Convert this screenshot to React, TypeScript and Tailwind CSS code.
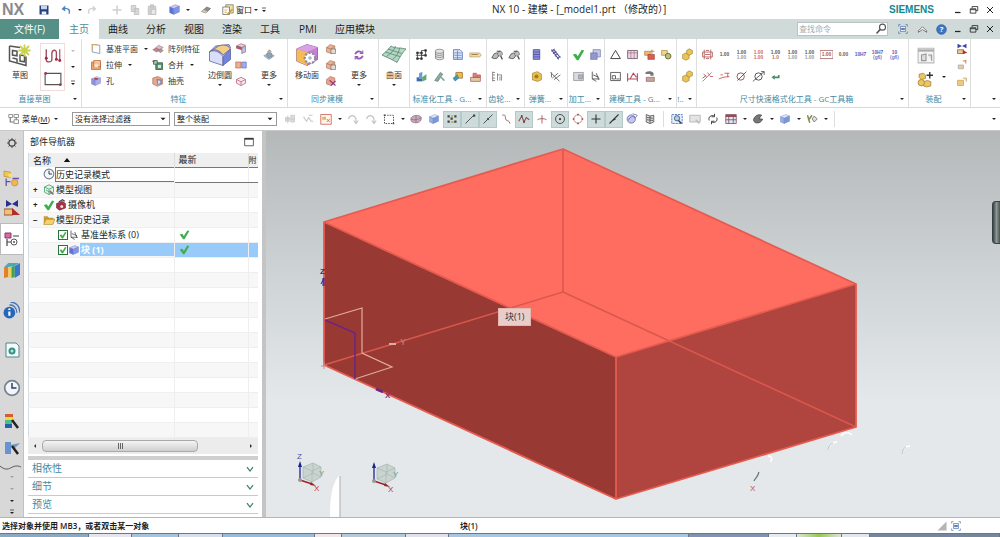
import React from 'react';

const box3d = (top: string, left: string, right: string) => (
  <g stroke="#6b6fae" strokeWidth="0.5" strokeLinejoin="round">
    <path d="M2 5 9 2 14 4 7 7Z" fill={top} />
    <path d="M2 5 7 7V14L2 12Z" fill={left} />
    <path d="M7 7 14 4V11L7 14Z" fill={right} />
  </g>
);

const triangleDown = <path d="M4 6h8l-4 4z" fill="#222" />;

const restore = (
  <g fill="none" stroke="#222" strokeWidth="1.3">
    <path d="M5 5V2.500h9v6.500h-3" />
    <path d="M2 6h9v7H2zM2 7.500h9" />
  </g>
);

const dimText = (a: string, b: string, color: string, color2: string) => (
  <g fontFamily="Liberation Sans, sans-serif" fontSize="6" fontWeight="bold" textAnchor="middle">
    <text x="8" y={b ? 7 : 10} fill={color}>{a}</text>
    {b && <text x="8" y="14" fill={color2}>{b}</text>}
  </g>
);

const icons: Record<string, React.ReactNode> = {
  save: <><path d="M2 2h12v12H2z" fill="#26417f" /><path d="M4 2h8v5H4z" fill="#c5d6ee" /><path d="M5 10h6v4H5z" fill="#eef2fa" /></>,
  undo: <><path d="M12 13c2-4 0-8-7-7" fill="none" stroke="#4f83c4" strokeWidth="2" /><path d="M2 6.500 7 2v8z" fill="#4f83c4" /></>,
  redo: <><path d="M4 13c-2-4 0-8 7-7" fill="none" stroke="#d2d2d2" strokeWidth="2" /><path d="M14 6.500 9 2v8z" fill="#d2d2d2" /></>,
  cut: <path d="M8 2v12M2 8h12" stroke="#cfcfcf" strokeWidth="2" />,
  copy: <g fill="#d8d8d8" stroke="#bbb"><path d="M3 2h6v8H3zM7 6h6v8H7z" /></g>,
  paste: <g fill="#d0d0d0" stroke="#bbb"><path d="M3 3h10v11H3z" /><path d="M6 1h4v3H6z" /><path d="M7 7h6v7H7z" fill="#e8e8e8" /></g>,
  cube: box3d('#c3cdf8', '#5a74dc', '#7d95ea'),
  cubeLight: box3d('#dfe8fa', '#94b1e6', '#739bdd'),
  eraser: <><path d="M2 10 9 4 14 6 8 12Z" fill="#8c8c8c" stroke="#555" strokeWidth="0.7" /><path d="M2 10 5 7.500 10 10 8 12Z" fill="#d8c9a0" /></>,
  windows: <><path d="M5 1h10v11H5z" fill="#efe3a2" stroke="#777" /><path d="M1 4h9v10H1z" fill="#fff" stroke="#666" /><path d="M3 8h4M3 11h4" stroke="#d39b35" /><path d="M7 14 14 7" stroke="#c49b32" strokeWidth="2" /></>,
  triangle: triangleDown,
  overflow: <><path d="M4 4h8" stroke="#333" strokeWidth="1.500" /><path d="M4 8h8l-4 4z" fill="#222" /></>,
  minimize: <path d="M2 13h11" stroke="#222" strokeWidth="2.500" />,
  restore,
  close: <path d="M2 2 14 14M14 2 2 14" stroke="#222" strokeWidth="2" />,
  search: <><circle cx="10" cy="5.500" r="4" fill="#fff" stroke="#555" strokeWidth="1.500" /><path d="M7 8.500 2 14" stroke="#555" strokeWidth="2" /></>,
  fullscreen: <g fill="none" stroke="#3f67a8"><path d="M1 4V1h3M12 1h3v3M15 12v3h-3M4 15H1v-3" /><path d="M4 4h8v8H4z" fill="#fff" /><path d="M5 7h6M5 9h6" strokeWidth="1.500" /></g>,
  chevronUp: <path d="M2 12V10L8 4l6 6v2L8 8z" fill="#fff" stroke="#444" />,
  help: <><circle cx="8" cy="8" r="7" fill="#3c74c9" stroke="#2b579a" /><text x="8" y="12" fontSize="11" fontWeight="bold" fill="#fff" textAnchor="middle">?</text></>,
  sketch: <g fill="none" stroke="#555"><path d="M1 2v10l11 3V9" /><path d="M1 2l7 1M3 5l3 .5v3L3 8zM3 10l3 .7v2.300M8 8l3 .5v4L8 12z" /><path d="M11 1v8M7 5h8M8 2l6 6M14 2 8 8" stroke="#c9d24a" strokeWidth="1.200" /></g>,
  profile: <g fill="none"><path d="M2 2v9M2 11c0 3 5 3 5 0V6c0-4 4-4 4-1v6" stroke="#9c4a5c" strokeWidth="1.200" /><path d="M14 2v10" stroke="#9c4a5c" /><g fill="#a02840"><circle cx="2" cy="10" r="1.300" /><circle cx="11" cy="11" r="1.300" /><circle cx="14" cy="12" r="1.300" /></g></g>,
  rect: <><path d="M1 3h14v10H1z" fill="none" stroke="#555" /><g fill="#9c3550"><circle cx="1.500" cy="3" r="1.200" /><circle cx="14.500" cy="13" r="1.200" /></g></>,
  datum: <><path d="M3 2 13 3v11L3 12z" fill="#fdfdfd" stroke="#6c87a8" /><path d="M2 2h8M3 2v8" stroke="#dda152" /></>,
  extrude: <><path d="M2 4h12v10H2z" fill="#e9a36d" stroke="#b7693b" /><path d="M5 2h9v8H5z" fill="#f3c29a" stroke="#b7693b" /><path d="M6 7h5v4H6z" fill="#fae4cc" /></>,
  hole: <>{box3d('#d9dcfb', '#8d93dc', '#a9aeea')}<ellipse cx="8" cy="5" rx="3" ry="1.500" fill="#a9465b" /></>,
  pattern: <g stroke="#8f5360" strokeWidth="0.600"><path d="M1 9 6 6l5 3-5 3z" fill="#c5828c" /><path d="M5 6 9 3l6 3-5 3z" fill="#d3c0c4" /><path d="M8 10l4-2 3 2-4 3z" fill="#9d9d9d" /></g>,
  unite: <><path d="M5 5h9v9H5z" fill="#5c9375" stroke="#2f5c45" /><path d="M8 8h4v4H8z" fill="#d5e7db" /><path d="M2 2h5v5H2z" fill="#9fc8ae" stroke="#2f5c45" /><path d="M0 3h4" stroke="#b33" /></>,
  shell: <><path d="M1 4l7-2 6 3v7l-7 3-6-3z" fill="#e8a88a" stroke="#99533b" strokeWidth="0.700" /><path d="M6 5l7 1v6l-6 1z" fill="#7c88b9" /><path d="M8 7l3 1v3l-3 1z" fill="#dde" /></>,
  blend: <g stroke="#59599b" strokeWidth="0.500"><path d="M1 6 5 2l9-1 1 2-4 4z" fill="#aeb9ef" /><path d="M1 6c3-3 7-1 9 2l5-4c-2-3-5-3-8-2z" fill="#f3cf84" /><path d="M1 6c3-2 7 0 9 3v6L1 12z" fill="#d9defb" /><path d="M10 9 15 4v7l-5 4z" fill="#7083df" /></g>,
  draft: <g stroke="#7b4a66" strokeWidth="0.700"><path d="M2 4 8 1l6 2-5 3z" fill="#f0cdd3" /><path d="M2 4l7 2v3L2 7z" fill="#c2506a" /><path d="M9 7l5-3v8l-5 2z" fill="#b9c3df" /></g>,
  mirror: <g strokeWidth="0.800"><path d="M1 4h7v8H1z" fill="#e9b48a" stroke="#c0485a" /><path d="M9 4h6v8H9z" fill="#9db1e8" stroke="#5367b0" /></g>,
  wave: <g fill="none" stroke="#b8627a"><path d="M2 6 8 3l6 3v5l-6 3-6-3z" fill="#f7e6ec" /><path d="M2 6l6 3 6-3M8 9v5" /></g>,
  moreFeature: <g stroke="#6b7a91" strokeWidth="0.700"><path d="M1 9l6-3 8 3-7 5z" fill="#b6c4d8" /><path d="M5 10V6l3-2 4 2v4l-4 2z" fill="#8fa3bd" /><path d="M8 1l3 2-3 3-2-2z" fill="#e3b57c" /></g>,
  moveFace: <><path d="M1 4 8 1l7 2v8l-7 4-7-3z" fill="#c97fd6" stroke="#804fa3" strokeWidth="0.500" /><path d="M1 4l7 2v9l-7-3z" fill="#f4bc55" /><path d="M1 4 8 1l7 2-7 3z" fill="#d9a2e6" /><circle cx="10" cy="10" r="3.500" fill="#fff" stroke="#8d8d9d" strokeDasharray="1.500 1" strokeWidth="1.500" /><circle cx="10" cy="10" r="1.200" fill="#b4b4c6" /></>,
  face: <><path d="M2 6 7 2l6 2v6l-5 4-6-2z" fill="#eab38e" stroke="#965d4b" strokeWidth="0.700" /><path d="M2 6l6 2 5-4" fill="none" stroke="#965d4b" strokeWidth="0.700" /><path d="M8 8h6v6H8z" fill="#ddd" stroke="#555" strokeWidth="0.700" /></>,
  faceDelete: <><path d="M2 6 7 2l6 2v6l-5 4-6-2z" fill="#eaa28e" stroke="#965d4b" strokeWidth="0.700" /><path d="M6 7l8 7M14 8l-6 6" stroke="#8e3f86" strokeWidth="1.500" /></>,
  sync: <g fill="none" stroke="#9b59b6" strokeWidth="2.500"><path d="M3 7c1-4 6-5 9-2M13 9c-1 4-6 5-9 2" /><path d="M13 2v4H9M3 14v-4h4" strokeWidth="1.500" /></g>,
  surface: <g stroke="#5f8f78" strokeWidth="0.600"><path d="M0 8C3 6 5 3 6 2c3 2 7 1 10 2-2 2-4 5-6 9-3-2-6-3-10-5z" fill="#b4d6c3" /><path d="M3 9c3-2 5-4 6-7M7 11c3-2 4-5 5-8M2 6c4 1 6 2 10 3M4 4c3 1 6 2 9 3" fill="none" /></g>,
  nodes: <g fill="none" stroke="#444"><path d="M3 6h5v7H3zM8 3h5v6H8zM1 9h12" /><g fill="#222"><path d="M2 5h2v2H2zM7 5h2v2H7zM12 2h2v2h-2zM2 12h2v2H2zM7 12h2v2H7zM12 8h2v2h-2z" /></g></g>,
  stack: <g fill="#e4e4e4" stroke="#666" strokeWidth="0.800"><path d="M3 3c2-2 8-2 10 0v10c-2 2-8 2-10 0z" /><path d="M3 5.500c3 1.500 7 1.500 10 0M3 8c3 1.500 7 1.500 10 0M3 10.500c3 1.500 7 1.500 10 0" /></g>,
  sheet: <><path d="M3 2h8l3 3v9H3z" fill="#dbe5fa" stroke="#5673b6" /><path d="M4 6h9M4 9h9M4 12h9M8 3v11" stroke="#5673b6" strokeWidth="0.800" /></>,
  tag: <><path d="M1 6h12l2 3-2 2H1z" fill="#eedcac" stroke="#a58b56" strokeWidth="0.700" /><path d="M3 8h8" stroke="#9c6b32" /></>,
  blueTool: <><path d="M2 9h7v5H2z" fill="#3a6db3" /><path d="M5 4l4-2v9H5z" fill="#6c9cd8" /><path d="M9 9l5-4v7l-5 2z" fill="#66a76a" /></>,
  pencilTool: <><path d="M2 13 9 3l3 2-6 9z" fill="#7fb19a" stroke="#556" strokeWidth="0.600" /><path d="M10 9l4 4" stroke="#8a8" strokeWidth="2" /></>,
  boxTool: <><path d="M6 3h8v7H6z" fill="#eebd4b" stroke="#a4702a" /><path d="M2 10l6-5 2 5-5 4z" fill="#4a95ae" /></>,
  stamp: <g stroke="#a44" strokeWidth="0.800"><path d="M2 9h12v5H2z" fill="#e6c8a0" /><path d="M5 4h4v5H5zM10 6h4v3h-4z" fill="#d88" /></g>,
  gear2: <g fill="#bbb" stroke="#4c4c4c"><path d="M1 12l3-5 3-1 3 3-3 4H4z" /><circle cx="11" cy="7" r="3" strokeDasharray="2 1" /><path d="M7 4h5M12 10l2 4" fill="none" strokeWidth="1.500" /></g>,
  rack: <path d="M2 2v12M2 3h3M2 6h3M2 10h3M2 13h3M8 4v9M8 6h5v7M11 8v5" fill="none" stroke="#777" />,
  spring: <><path d="M4 2h8v12H4z" fill="#8f92d9" stroke="#4d4f9e" /><path d="M4 5h8M4 8h8M4 11h8" stroke="#4d4f9e" /></>,
  springTilt: <path d="M3 2l9 12M6 2l8 10M3 4l4-3M5 7l4-3M7 10l4-3M10 13l4-3" stroke="#565897" strokeWidth="1.300" />,
  springDisc: <><path d="M3 4l6-2 5 3v7l-5 2-6-2z" fill="#e9c24e" stroke="#8b6a24" strokeWidth="0.700" /><circle cx="8" cy="8" r="2.500" fill="#a47c22" /></>,
  springLine: <path d="M2 3l11 11M4 10l7-6M6 12l8-6M3 3v6" stroke="#555" fill="none" />,
  check: <path d="M1 8l4-1 2 3 5-8 3 1-7 12H6z" fill="#3fae4d" />,
  sheets: <g stroke="#6c6f9c" strokeWidth="0.800"><path d="M5 2h9v9H5z" fill="#c5c8ee" /><path d="M2 6h8v8H2z" fill="#9298cc" /></g>,
  gray: <g stroke="#999"><path d="M2 3h12v10H2z" fill="#d8dbe2" /><path d="M8 6h5v5H8z" fill="#aab3c8" /></g>,
  csys: <g fill="none" stroke="#444"><path d="M4 2v9h9M4 11l5 3M5 6l7 3M9 4l3 8" /></g>,
  tri: <path d="M8 3 14 13H2z" fill="none" stroke="#444" strokeWidth="1.200" />,
  table: <><path d="M2 3h12v10H2z" fill="#e7d8ef" stroke="#656" /><path d="M2 6h12M6 3v10M10 3v10" stroke="#a66" strokeWidth="0.800" /></>,
  orange: <><path d="M2 4h7v5H2z" fill="#f0b76b" stroke="#a56d2f" strokeWidth="0.700" /><path d="M6 8h8v6H6z" fill="#d95f4f" stroke="#933" strokeWidth="0.700" /><path d="M11 2v6M9 4h5" stroke="#a37b1f" /></>,
  orange2: <><path d="M2 3h7v6H2z" fill="#efd489" stroke="#8d7235" strokeWidth="0.700" /><circle cx="10" cy="10" r="3.500" fill="#b6c27a" stroke="#665d2c" /></>,
  frame: <><path d="M2 3h12v10H2z" fill="none" stroke="#444" /><path d="M4 7h4v4H4zM9 11h4" stroke="#444" fill="none" /></>,
  measure: <path d="M2 4v10M14 4v10M2 11h12M5 11 9 4l4 5" fill="none" stroke="#b5485a" strokeWidth="1.300" />,
  find: <><path d="M3 3c3-2 8-2 10 1v3H9V5H3z" fill="#777" /><path d="M4 9h10v5H4z" fill="#c9a3a0" stroke="#754" strokeWidth="0.700" /></>,
  gold: <g fill="#eac551" stroke="#92742b" strokeWidth="0.700"><path d="M2 8l4-2 4 2v5l-4 2-4-2z" /><path d="M7 3l3-2 4 2v4l-4 2-3-2z" /></g>,
  dimBox: <path d="M2 5h12v6H2zM4 2v12M12 2v12M6 3h4M6 13h4M5 8h6" fill="none" stroke="#a55" />,
  d100: dimText('1.00', '', '#555', '#555'),
  d100s: dimText('1.00', '1.00', '#555', '#999'),
  d100r: dimText('1.00', '1.00', '#c66', '#c66'),
  d100m: dimText('1.00', '1.0', '#555', '#c66'),
  dFrame: <>{dimText('1.00', '', '#a55', '#a55')}<path d="M0 3h16v10H0z" fill="none" stroke="#a66" /></>,
  d000: dimText('0.00', '', '#755', '#755'),
  dh7: dimText('10H7', '', '#55b', '#55b'),
  dh7f: dimText('10H7', '(g6)', '#55b', '#77c'),
  d10f: dimText('10', '(g6)', '#55b', '#77c'),
  tolA: <><path d="M2 14 13 3M3 5l4 3M8 3l3 4M11 8h4" stroke="#c55" fill="none" /><path d="M2 10l4-3" stroke="#555" /></>,
  tolB: <path d="M1 11l5-2 8-1M3 6h3M8 4h6M12 4v5" stroke="#c66" fill="none" strokeWidth="1.200" />,
  diameter: <><circle cx="7" cy="8" r="4.500" fill="none" stroke="#955" strokeWidth="1.200" /><path d="M3 13 14 2" stroke="#444" /></>,
  diameter2: <><circle cx="8" cy="8" r="4.500" fill="none" stroke="#555" strokeWidth="1.200" /><path d="M1 14 15 2M11 2h4v4" stroke="#444" fill="none" /></>,
  returnArrow: <path d="M13 6v4H7v2L3 9l4-3v2h4V6z" fill="#4d8b6b" />,
  assembly: <><path d="M1 2h14v13H1z" fill="#f4f4f4" stroke="#bbb" /><path d="M1 4h14" stroke="#aaa" strokeWidth="2" /><path d="M4 8l4-1v6H4zM10 8h3v5" fill="#ddd" stroke="#999" /></>,
  addPart: <><g fill="#edc65f" stroke="#9b7c33" strokeWidth="0.700"><path d="M2 3l4-1 2 2v3L4 8 2 6zM6 10l4-1 3 1v4l-4 1-3-1z" /><circle cx="4" cy="11" r="3" /></g><path d="M12 1v6M9 4h6" stroke="#333" strokeWidth="1.300" /></>,
  constraint: <><path d="M2 1v6l6-3zM14 1v6L8 4z" fill="#4044a8" /><path d="M2 9h8v5H2z" fill="#eecb94" stroke="#8f5a2c" /><path d="M9 9l6 4-6 2z" fill="#b0322f" /></>,
  movePart: <><path d="M3 8h7v5H3z" fill="#e7cc99" stroke="#aaa" /><path d="M9 3l4-1v4" stroke="#c59050" fill="none" strokeWidth="1.500" /></>,
  patternPart: <><path d="M2 7h8v7H2z" fill="#efc87c" stroke="#b18a45" strokeWidth="0.700" /><path d="M9 4h5v5" fill="#f8ddb0" stroke="#b18a45" strokeWidth="0.700" /></>,
  menu: <g fill="none" stroke="#777"><path d="M1 2h5v4H1zM8 9h6v5H8zM8 2h6v4H8z" /><path d="M3 6v6h5M11 6v3" strokeWidth="1.500" /></g>,
  dimGear: <g fill="#ddd" stroke="#c5c5c5"><path d="M2 6h5v5H2zM9 3h5v9H9z" /><path d="M5 3v11M2 8h12" /></g>,
  dimPath: <path d="M2 5l4 6 3-5 3 5h3M9 3h5" fill="none" stroke="#c8c8c8" strokeWidth="1.500" />,
  selBox: <><path d="M1 2h14v13H1z" fill="#fff6ea" stroke="#c9544b" /><path d="M3 5h5v4H3z" fill="#efb15f" /><path d="M9 8l4 4M13 8l-4 4" stroke="#b55" /></>,
  dimArrow: <path d="M2 8c2-6 8-6 10 0v5M9 10l3 4 3-4" fill="none" stroke="#c4c4c4" strokeWidth="1.500" />,
  marquee: <><path d="M2 3h12v11H2z" fill="none" stroke="#444" strokeDasharray="2 1.500" strokeWidth="1.200" /><path d="M1 2h2v2H1zM13 13h2v2h-2z" fill="#444" /></>,
  mesh: <g fill="#c9a8b8" stroke="#6e5a70" strokeWidth="0.700"><path d="M1 8c0-5 12-7 14-2 1 5-4 8-9 7-3 0-5-2-5-5z" /><path d="M1 8c5 2 10 1 14-2M8 3v10" fill="none" /></g>,
  points: <g fill="#444"><path d="M2 3h3v3H2zM11 3h3v3h-3zM6 6h3v3H6zM2 10h3v3H2zM11 10h3v3h-3z" /><path d="M7 11h3v2H7zM7 3h2v2H7z" fill="#b49b2c" /></g>,
  line: <><path d="M2 14 13 3" stroke="#444" strokeWidth="1.200" /><path d="M12 2h3v3h-3z" fill="#444" /></>,
  midline: <><path d="M2 14 14 2" stroke="#444" strokeWidth="1.200" /><circle cx="8" cy="8" r="1.500" fill="#444" /></>,
  curve: <path d="M3 3c6-2 3 4 5 6s5 1 5 5" fill="none" stroke="#955" strokeWidth="1.200" />,
  spline: <><path d="M1 11 5 4l3 8 3-6 4 3" fill="none" stroke="#924a5c" strokeWidth="1.500" /><path d="M4 3h2v2H4zM7 11h2v2H7z" fill="#444" /></>,
  cross: <path d="M8 3v11M2 9c2-2 10-2 12 0" fill="none" stroke="#a05a5a" strokeWidth="1.200" />,
  center: <><circle cx="8" cy="8" r="6" fill="none" stroke="#444" strokeWidth="1.200" /><circle cx="8" cy="8" r="1.500" fill="#333" /></>,
  circle: <><circle cx="8" cy="8" r="5.500" fill="none" stroke="#b66" /><path d="M7 1h2v2H7zM7 13h2v2H7zM1 7h2v2H1zM13 7h2v2h-2z" fill="#944" /></>,
  plus: <path d="M8 2v12M2 8h12" stroke="#333" strokeWidth="1.500" />,
  slash: <path d="M2 14 14 2M6 10l4-2" stroke="#333" strokeWidth="1.500" />,
  ball: <><circle cx="7" cy="8" r="5.500" fill="#c4c9ec" stroke="#5c63a8" /><path d="M3 10c3-6 6-6 9-4M9 1l6 2-3 4" stroke="#5c63a8" fill="none" /></>,
  pages: <path d="M3 2l5 2v10l-5-2zM8 4l5-1v9l-5 2M4 6l8 1M4 9l8 1" fill="#ddd" stroke="#444" />,
  zoomFit: <><path d="M1 2h14v12H1z" fill="#e5eefb" stroke="#3e6ab3" strokeDasharray="3 1" /><circle cx="8" cy="7" r="3.500" fill="#b6cff0" stroke="#345" /><path d="M10 10l4 4" stroke="#345" strokeWidth="2" /></>,
  window: <><path d="M1 3h14v9H1z" fill="#e4e4e4" stroke="#aaa" /><path d="M9 9l5 5" stroke="#bbb" strokeWidth="2" /></>,
  rotate: <path d="M3 10C1 5 6 2 10 4M13 6c2 5-3 8-7 6M10 1v4H6M6 15v-4h4" fill="none" stroke="#444" strokeWidth="1.300" />,
  layout: <><path d="M1 2h14v12H1z" fill="#dfe8f5" stroke="#7c4254" /><path d="M1 4h14" stroke="#944" strokeWidth="2.500" /><path d="M5 4v10M11 4v10M1 9h14" stroke="#7c4254" /></>,
  shade: <path d="M2 9c1-5 6-8 11-6-2 2-3 3-3 5h4c-1 4-5 6-9 5-2-1-3-2-3-4z" fill="#777" stroke="#444" />,
  clip: <><path d="M2 3l3 10M3 10l5-7" stroke="#8b8b55" strokeWidth="2" fill="none" /><path d="M11 4l4 4-4 4-3-4z" fill="#ddd" stroke="#666" /></>,
  gear: <><circle cx="8" cy="8" r="5" fill="none" stroke="#444" strokeWidth="2" /><path d="M8 0v3M8 13v3M0 8h3M13 8h3M2.500 2.500l2 2M11.500 11.500l2 2M13.500 2.500l-2 2M2.500 13.500l2-2" stroke="#444" strokeWidth="1.500" /></>,
  assemblyNav: <><path d="M1 1l6 1v5L1 6z" fill="#f0c84d" stroke="#b0872d" strokeWidth="0.600" /><circle cx="7" cy="5" r="2" fill="#f7dc83" /><path d="M3 8v7M3 11h4M9 8h6" stroke="#6350a8" strokeWidth="1.200" fill="none" /><circle cx="11" cy="12" r="3" fill="#f0b657" stroke="#b0872d" strokeWidth="0.600" /></>,
  constraintNav: <><path d="M2 0v7l6-3zM14 0v7L8 4z" fill="#282f91" /><path d="M0 9h9v6H0z" fill="#f0c17d" stroke="#925b2d" /><path d="M8 8l8 7H8z" fill="#b22c28" /></>,
  partNav: <><path d="M1 2h6v5H1z" fill="#d66ba6" stroke="#843a6a" /><path d="M9 5h6M3 8v7M3 11h4" stroke="#444" fill="none" strokeWidth="1.200" /><circle cx="10" cy="11" r="3" fill="#fff" stroke="#555" /><circle cx="10" cy="11" r="1" fill="#555" /></>,
  library: <><path d="M1 5l4-2v11l-4 1z" fill="#e87b2d" /><path d="M5 5l3-2v11l-3 1z" fill="#e9d35a" /><path d="M8 5l3-2v11l-3 1z" fill="#44a248" /><path d="M11 4l5-3v11l-5 3z" fill="#3978c9" /><path d="M1 5l4-4h10l-4 3z" fill="#49a9b5" /></>,
  internet: <><circle cx="6" cy="10" r="5.500" fill="#2766b8" /><path d="M6 6v1.500M6 9v4" stroke="#fff" strokeWidth="2" /><path d="M6 3c4-1 7 3 7 7M7 0c5 0 9 4 9 10" fill="none" stroke="#4173ba" strokeWidth="1.200" /></>,
  page: <><path d="M2 1h10l3 3v11H2z" fill="#f3fbfa" stroke="#55858c" /><circle cx="8" cy="9" r="3.500" fill="#359183" /><circle cx="8" cy="9" r="1.500" fill="#b7e5dc" /></>,
  clock: <><circle cx="8" cy="8" r="6.500" fill="#f2f5fa" stroke="#75818f" strokeWidth="1.500" /><path d="M8 3.500V8h4" fill="none" stroke="#2c3c55" strokeWidth="1.300" /></>,
  palette: <><path d="M1 1h8v3H1z" fill="#d75a35" /><path d="M1 4h8v3H1z" fill="#f2da3a" /><path d="M1 7h7v4H1z" fill="#45c18b" /><path d="M1 11h7v4H1z" fill="#225fae" /><path d="M8 7l6 8" stroke="#222" strokeWidth="2.500" /></>,
  role: <><path d="M1 2h6v12H1z" fill="#6893d0" /><path d="M6 5l10-2-5 5z" fill="#7699bb" /><path d="M8 6l6 8" stroke="#222" strokeWidth="2.500" /></>,
  maximize: <><path d="M1 2h14v12H1z" fill="none" stroke="#333" strokeWidth="1.200" /><path d="M1 3h14" stroke="#333" strokeWidth="2.500" /></>,
  views: <><path d="M2 4l6-3 6 3v7l-6 3-6-3z" fill="#dff3e6" stroke="#3c9a68" /><path d="M2 4l6 3 6-3M8 7v7M4 8l8 5" fill="none" stroke="#3c9a68" /><path d="M9 9l5 5" stroke="#966" strokeWidth="2" /></>,
  camera: <><path d="M2 6l8-3 4 3v6l-8 3-4-3z" fill="#a5344b" stroke="#5f1f31" strokeWidth="0.700" /><path d="M5 4l5-3 3 2" stroke="#444" fill="none" strokeWidth="1.500" /><circle cx="9" cy="10" r="2" fill="#f1d6da" /></>,
  folder: <><path d="M1 3h5l2 2h6v8H1z" fill="#c99b34" /><path d="M4 7h12l-3 7H1z" fill="#f5d16b" stroke="#a77d24" strokeWidth="0.700" /></>,
  chevronDown: <path d="M2 4l6 8 6-8" fill="none" stroke="#3c7f70" strokeWidth="2.500" />,
  chevronLeft: <path d="M10 4v8L6 8z" fill="#333" />,
  chevronRight: <path d="M6 4v8l4-4z" fill="#333" />,
  grip: <path d="M14 2v12H2z" fill="#b5b5b5" />,
};

const Icon = ({ name, className = 'size-3' }: { name: string; className?: string }) => (
  <svg viewBox="0 0 16 16" className={`${className} shrink-0`} aria-hidden="true">{icons[name]}</svg>
);

const IconButton = ({ name, label, className = '', icon = 'size-3' }: { name: string; label?: string; className?: string; icon?: string }) => (
  <button type="button" aria-label={label ?? name} className={`flex items-center justify-center shrink-0 ${className}`}>
    <Icon name={name} className={icon} />
  </button>
);

const Arrow = ({ className = '' }: { className?: string }) => <IconButton name="triangle" label="展开" icon="size-2" className={className} />;

const Group = ({ label, width, children, noMenu }: { label: string; width: string; children: React.ReactNode; noMenu?: boolean }) => (
  <section aria-label={label} className={`${width} shrink-0 flex flex-col border-r border-[#dedede]`}>
    <div className="flex-1 flex justify-center">{children}</div>
    <div className="h-4 flex items-center">
      <span className="flex-1 text-center text-[#4389a3] whitespace-nowrap">{label}</span>
      {!noMenu && <Arrow className="w-3" />}
    </div>
  </section>
);

const BigButton = ({ name, label, arrow, icon = 'size-6', className = 'w-9' }: { name: string; label: string; arrow?: boolean; icon?: string; className?: string }) => (
  <button type="button" className={`flex flex-col items-center shrink-0 pt-0.5 ${className}`}>
    <span className="h-7 flex items-center"><Icon name={name} className={icon} /></span>
    <span className="whitespace-nowrap leading-3">{label}</span>
    {arrow && <Icon name="triangle" className="size-2" />}
  </button>
);

const RowButton = ({ name, label, arrow }: { name: string; label: string; arrow?: boolean }) => (
  <div className="h-4 flex items-center gap-0.5">
    <button type="button" className="flex items-center gap-1 whitespace-nowrap"><Icon name={name} />{label}</button>
    {arrow && <Arrow className="w-3" />}
  </div>
);

const Grid = ({ rows, cell = 'w-[17px]' }: { rows: string[][]; cell?: string }) => (
  <div className="flex-1 flex flex-col pt-1 pl-0.5">
    {rows.map((row, i) => (
      <div key={i} className="h-[22px] flex">
        {row.map((name, j) => <IconButton key={j} name={name} icon="size-[13px]" className={cell} />)}
      </div>
    ))}
  </div>
);

const tabs = ['主页', '曲线', '分析', '视图', '渲染', '工具', 'PMI', '应用模块'];

const filterTools = [
  'dimGear', 'dimPath', 'selBox', '>', 'dimArrow', 'dimArrow', 'marquee', '>', 'mesh', 'cubeLight', '*points', '*line', '*midline',
  'curve', '*spline', 'cross', '*center', 'circle', '*plus', '*slash', 'ball', 'pages', '|', 'zoomFit', 'window', 'rotate',
  'layout', '>', 'shade', '>', 'cubeLight', '>', 'clip', '>', '|',
];

const sideItems = [
  { name: 'gear', cls: 'h-6 mb-2', icon: 'size-[10px]' },
  { name: 'assemblyNav', cls: 'h-[30px]', icon: 'size-[17px]' },
  { name: 'constraintNav', cls: 'h-[30px]', icon: 'size-4' },
  { name: 'partNav', cls: 'h-8 bg-white border border-r-0 border-[#bbb]', icon: 'size-4' },
  { name: 'library', cls: 'h-[30px]', icon: 'size-[17px]' },
  { name: 'internet', cls: 'h-[50px]', icon: 'size-[17px]' },
  { name: 'page', cls: 'h-[30px]', icon: 'size-4' },
  { name: 'clock', cls: 'h-[46px]', icon: 'size-[18px]' },
  { name: 'palette', cls: 'h-5', icon: 'size-4' },
  { name: 'role', cls: 'h-[34px]', icon: 'size-4' },
];

interface TreeRow {
  name?: string;
  icon?: string;
  expand?: string;
  tick?: boolean;
  child?: boolean;
  focus?: boolean;
  selected?: boolean;
}

const treeRows: TreeRow[] = [
  { name: '历史记录模式', icon: 'clock', expand: ' ', focus: true },
  { name: '模型视图', icon: 'views', expand: '+' },
  { name: '摄像机', icon: 'camera', expand: '+', tick: true },
  { name: '模型历史记录', icon: 'folder', expand: '−' },
  { name: '基准坐标系 (0)', icon: 'csys', child: true },
  { name: '块 (1)', icon: 'cube', child: true, selected: true },
  ...Array.from({ length: 12 }, () => ({})),
];

const TitleBar = () => (
  <header className="h-[19px] shrink-0 flex items-center bg-white text-[10px]">
    <div className="w-[49%] flex items-center">
      <span className="w-9 pl-0.5 text-[16px] leading-4 font-bold text-[#8a8a8a] font-[Liberation_Sans,sans-serif]">NX</span>
      <IconButton name="save" label="保存" className="w-4" />
      <IconButton name="undo" label="撤消" className="w-5 ml-1" />
      <Arrow className="w-2" />
      <IconButton name="redo" label="重做" className="w-4" />
      <IconButton name="cut" className="w-[18px] ml-2" />
      <IconButton name="copy" className="w-[17px]" />
      <IconButton name="paste" className="w-[17px]" />
      <IconButton name="cube" icon="size-[13px]" className="w-5 ml-1" />
      <Arrow className="w-2" />
      <IconButton name="eraser" className="w-5 ml-1" />
      <button type="button" className="flex items-center gap-0.5 ml-1.5 text-[8px]"><Icon name="windows" />窗口</button>
      <Arrow className="w-2" />
      <IconButton name="overflow" icon="size-2" className="w-2" />
    </div>
    <h1 className="flex-1 pl-0.5 whitespace-nowrap">NX 10 - 建模 - [_model1.prt （修改的）]</h1>
    <div className="flex items-center justify-end">
      <span className="mr-4 font-bold text-[10px] text-[#138a8f] font-[Liberation_Sans,sans-serif]">SIEMENS</span>
      <IconButton name="minimize" icon="size-2" className="w-4" />
      <IconButton name="restore" icon="size-[10px]" className="w-4" />
      <IconButton name="close" icon="size-2" className="w-4 mr-0.5" />
    </div>
  </header>
);

const TabBar = () => (
  <nav className="h-5 shrink-0 flex items-stretch bg-[#cfdad9] text-[10px]">
    <button type="button" className="w-[59px] bg-[#558f86] text-white">文件(F)</button>
    <div className="flex flex-1">
      {tabs.map((tab, i) => (
        <button
          key={tab}
          type="button"
          className={`whitespace-nowrap ${i === 0 ? 'bg-white text-[#4d8f9a] w-10' : i === 7 ? 'w-14' : 'w-[38px]'}`}
        >
          {tab}
        </button>
      ))}
    </div>
    <div className="flex items-center">
      <div className="flex items-center w-[91px] h-[14px] bg-white border border-[#b9c3c2] mr-1.5">
        <input type="text" aria-label="查找命令" placeholder="查找命令" className="flex-1 min-w-0 px-px text-[8px] placeholder:text-[#aaa] outline-none" />
        <Icon name="search" />
      </div>
      <IconButton name="fullscreen" icon="size-[10px]" className="w-[18px]" />
      <IconButton name="chevronUp" icon="size-[11px]" className="w-5" />
      <IconButton name="help" label="帮助" icon="size-[11px]" className="w-[18px]" />
      <IconButton name="minimize" icon="size-2" className="w-4" />
      <IconButton name="restore" icon="size-[10px]" className="w-4" />
      <IconButton name="close" icon="size-2" className="w-4 mr-0.5" />
    </div>
  </nav>
);

const Ribbon = () => (
  <div className="h-[69px] shrink-0 flex bg-white border-b border-[#d9d9d9] text-[8px] text-[#333]">
    <Group label="直接草图" width="w-[82px]">
      <BigButton name="sketch" label="草图" className="w-10" />
      <div className="w-[25px] mt-1 flex flex-col justify-around border border-[#f1dcdc]">
        <IconButton name="profile" icon="size-[18px]" />
        <IconButton name="rect" icon="size-[18px]" />
      </div>
      <div className="w-4 pt-1 flex flex-col justify-around">
        <Arrow className="opacity-30" />
        <Arrow />
        <IconButton name="overflow" icon="size-2" />
      </div>
    </Group>
    <Group label="特征" width="w-[206px]">
      <div className="flex-1 flex pl-2">
        <div className="w-[62px] pt-0.5">
          <RowButton name="datum" label="基准平面" arrow />
          <RowButton name="extrude" label="拉伸" arrow />
          <RowButton name="hole" label="孔" />
        </div>
        <div className="w-[53px] pt-0.5">
          <RowButton name="pattern" label="阵列特征" />
          <RowButton name="unite" label="合并" arrow />
          <RowButton name="shell" label="抽壳" />
        </div>
        <BigButton name="blend" label="边倒圆" arrow className="w-[30px]" />
        <div className="w-4 pt-0.5">
          <IconButton name="draft" className="h-4" />
          <IconButton name="mirror" className="h-4" />
          <IconButton name="wave" className="h-4" />
        </div>
        <BigButton name="moreFeature" label="更多" arrow icon="size-3" />
      </div>
    </Group>
    <Group label="同步建模" width="w-[91px]">
      <BigButton name="moveFace" label="移动面" />
      <div className="w-4 pt-0.5">
        <IconButton name="face" className="h-4" />
        <IconButton name="face" className="h-4" />
        <IconButton name="faceDelete" className="h-4" />
      </div>
      <BigButton name="sync" label="更多" arrow icon="size-3" />
    </Group>
    <Group label="" width="w-[31px]" noMenu>
      <BigButton name="surface" label="曲面" arrow className="w-[30px]" />
    </Group>
    <Group label="标准化工具 - G..." width="w-[77px]">
      <Grid rows={[['nodes', 'stack', 'sheet', 'tag'], ['blueTool', 'pencilTool', 'boxTool', 'stamp']]} cell="w-[18px]" />
    </Group>
    <Group label="齿轮..." width="w-[38px]">
      <Grid rows={[['gear2', 'gear2'], ['rack']]} />
    </Group>
    <Group label="弹簧..." width="w-[43px]">
      <Grid rows={[['spring', 'springTilt'], ['springDisc', 'springLine']]} cell="w-[19px]" />
    </Group>
    <Group label="加工..." width="w-[37px]">
      <Grid rows={[['check', 'sheets'], ['gray', 'csys']]} />
    </Group>
    <Group label="建模工具 - G..." width="w-[72px]">
      <Grid rows={[['tri', 'table', 'orange', 'orange2'], ['frame', 'measure', 'find']]} />
    </Group>
    <Group label="!.." width="w-5">
      <Grid rows={[['gold'], ['gold']]} />
    </Group>
    <Group label="尺寸快速格式化工具 - GC工具箱" width="w-[212px]">
      <Grid
        rows={[
          ['dimBox', 'd100', 'd100s', 'd100r', 'd100m', 'd100s', 'd100s', 'dFrame', 'd000', 'dh7', 'dh7f', 'd10f'],
          ['tolA', 'tolB', 'diameter', 'diameter2', 'returnArrow'],
        ]}
      />
    </Group>
    <Group label="装配" width="w-[62px]">
      <div className="w-7 pt-1 flex flex-col items-center">
        <IconButton name="assembly" icon="size-[18px]" className="h-6" />
        <IconButton name="addPart" icon="size-[17px]" className="h-6" />
      </div>
      <Arrow className="w-2 mt-6" />
      <div className="w-5 pt-0.5 flex flex-col items-end">
        <IconButton name="constraint" className="h-4" />
        <IconButton name="movePart" className="h-4" />
        <IconButton name="patternPart" className="h-4" />
      </div>
    </Group>
    <div className="flex-1 flex items-end justify-end"><Arrow className="w-3 h-4" /></div>
  </div>
);

const SelectBox = ({ label, width }: { label: string; width: string }) => (
  <div className={`${width} h-[14px] mr-1 shrink-0 relative flex items-center`}>
    <select aria-label={label} className="size-full appearance-none border border-[#999] bg-white px-0.5 text-[8px] leading-3">
      <option>{label}</option>
    </select>
    <span className="absolute right-0.5 top-0 h-full flex items-center pointer-events-none"><Icon name="triangle" className="size-2.5" /></span>
  </div>
);

const FilterBar = () => (
  <div className="h-[23px] shrink-0 flex items-center bg-white border-b border-[#c9c9c9] text-[8px]">
    <button type="button" className="flex items-center gap-0.5 w-16 mr-2 pl-2 whitespace-nowrap">
      <Icon name="menu" />
      <span>菜单(<u>M</u>)</span>
      <Icon name="triangle" className="size-2" />
    </button>
    <SelectBox label="没有选择过滤器" width="w-[98px]" />
    <SelectBox label="整个装配" width="w-[103px]" />
    {filterTools.map((tool, i) => {
      if (tool === '>') return <Arrow key={i} className="w-[9px]" />;
      if (tool === '|') return <span key={i} className="w-px h-4 mx-1 bg-[#ddd]" />;
      const active = tool.startsWith('*');
      return (
        <IconButton
          key={i}
          name={tool.replace('*', '')}
          className={active ? 'w-[18px] h-[17px] bg-[#cddcda] border border-[#b5c9c6]' : 'w-[18px] h-[17px]'}
        />
      );
    })}
    <span className="flex-1" />
    <Arrow className="w-3" />
  </div>
);

const Sidebar = () => (
  <aside className="w-6 shrink-0 flex flex-col bg-[#d8d8d8] border-r border-[#c2c2c2]">
    {sideItems.map(item => <IconButton key={item.name} name={item.name} icon={item.icon} className={item.cls} />)}
    <svg viewBox="0 0 24 6" className="w-full h-1.5 shrink-0" aria-hidden="true">
      <path d="M0 1c6 5 9 3 13 1s7-1 9 0" fill="none" stroke="#555" />
    </svg>
    <Arrow className="h-3 opacity-30" />
    <Arrow className="h-3 opacity-30" />
    <Arrow className="h-3" />
    <IconButton name="overflow" icon="size-2" className="h-2.5" />
  </aside>
);

const Navigator = () => (
  <section className="w-[242px] shrink-0 flex flex-col bg-white border-r-4 border-[#c4c4c4] pl-1 pr-1 text-[9px] text-[#222]">
    <div className="h-[22px] shrink-0 flex items-center justify-between pl-0.5 pr-1">
      <h2>部件导航器</h2>
      <IconButton name="maximize" label="最大化" icon="size-[10px]" />
    </div>
    <table className="w-full table-fixed border-collapse border-l border-[#d5dbe2]">
      <colgroup>
        <col />
        <col className="w-[74px]" />
        <col className="w-2.5" />
      </colgroup>
      <thead>
        <tr className="h-[14px] bg-[#efefef] leading-[13px]">
          <th className="p-0 pl-1 text-left font-normal"><span className="flex items-center gap-3">名称 <svg viewBox="0 0 8 5" className="w-2 h-1"><path d="M4 0l4 5H0z" fill="#111" /></svg></span></th>
          <th className="p-0 pl-1 text-left font-normal border-l border-[#ddd]">最新</th>
          <th className="p-0 text-left font-normal text-[8px] border-l border-[#ddd]">附</th>
        </tr>
      </thead>
      <tbody>
        {treeRows.map((row, i) => (
          <tr key={i} className={`h-[15px] leading-[13px] ${i % 2 ? 'bg-[#f7f7f7]' : 'bg-white'}`}>
            <td className="p-0 border-b border-[#f0f0f0]">
              {row.name && (
                <div className={`flex items-center h-[14px] ${row.child ? 'pl-[29px]' : 'pl-1'}`}>
                  {row.expand && <span className="w-[10px] font-bold text-[8px]">{row.expand}</span>}
                  {row.tick && <Icon name="check" />}
                  {row.child && (
                    <span className="relative flex">
                      <input
                        type="checkbox"
                        defaultChecked
                        aria-label={row.name}
                        className="peer appearance-none size-[10px] border border-[#29733a] bg-white"
                      />
                      <span className="absolute inset-0 hidden peer-checked:flex items-center justify-center pointer-events-none">
                        <Icon name="check" className="size-2" />
                      </span>
                    </span>
                  )}
                  <Icon name={row.icon!} />
                  <span className={`flex-1 ${row.focus ? 'border border-r-0 border-[#777]' : 'pl-px'} ${row.selected ? 'bg-[#99cbfa] text-white font-bold' : ''}`}>
                    {row.name}
                  </span>
                </div>
              )}
            </td>
            <td className={`p-0 pl-1 border-l border-b border-[#eee] ${row.selected ? 'bg-[#99cbfa]' : ''} ${row.focus ? 'border-y border-y-[#777]' : ''}`}>
              {row.child && <Icon name="check" className="size-[11px]" />}
            </td>
            <td className={`p-0 border-l border-b border-[#eee] ${row.selected ? 'bg-[#99cbfa]' : ''} ${row.focus ? 'border-y border-y-[#777]' : ''}`} />
          </tr>
        ))}
      </tbody>
    </table>
    <div className="h-4 shrink-0 flex items-center bg-[#ececec]">
      <IconButton name="chevronLeft" label="向左" icon="size-2" className="w-[14px]" />
      <div className="w-[156px] h-3 flex items-center justify-center gap-px rounded-sm border border-[#a9a9a9] bg-linear-to-b from-[#f5f5f5] to-[#cfcfcf]">
        <span className="w-px h-1.5 bg-[#666]" />
        <span className="w-px h-1.5 bg-[#666]" />
        <span className="w-px h-1.5 bg-[#666]" />
      </div>
      <span className="flex-1" />
      <IconButton name="chevronRight" label="向右" icon="size-2" className="w-[14px]" />
    </div>
    <div className="h-1 mt-0.5 shrink-0 bg-[#cfcfcf]" />
    {['相依性', '细节', '预览'].map(name => (
      <button key={name} type="button" className="h-[17px] mt-px shrink-0 flex items-center justify-between px-1 border-b border-[#c9c9c9] text-[10px] text-[#4389a3]">
        {name}
        <Icon name="chevronDown" className="size-2" />
      </button>
    ))}
  </section>
);

const Triad = ({ x, y, z }: { x: number; y: number; z?: boolean }) => (
  <g transform={`translate(${x} ${y})`} fontSize="8">
    <path d="M3-13l10-4 8 4v10l-9 5-9-4z" fill="#c9d4d1" stroke="#9fadA9" strokeWidth="0.600" />
    <path d="M3-13l9 4 9-4M12-9V2M13-17v10l8 4M13-7 3-2" fill="none" stroke="#a3b3ae" strokeWidth="0.600" />
    <path d="M0 0v-15" stroke="#1d2291" strokeWidth="1.300" />
    <path d="M-2-13 0-19l2 6z" fill="#1d2291" />
    <path d="M0 0l12 4" stroke="#982828" strokeWidth="1.500" />
    <path d="M16 6l-6-1 1-3z" fill="#982828" />
    <circle r="2" fill="#999" />
    {z && <text x="-3" y="-21" fill="#4d50a8">Z</text>}
    <text x="19" y="-4" fill="#6b9a76">Y</text>
    <text x="14" y="11" fill="#bc3535">X</text>
  </g>
);

const Viewport = () => (
  <main className="flex-1 min-w-0 relative overflow-hidden bg-linear-to-b from-[#b4b8b9] via-[#d0d5d7] via-40% to-[#e4e8eb] to-70%">
    <svg viewBox="266 131 734 386" preserveAspectRatio="xMinYMin meet" className="block w-full h-full font-[Liberation_Sans,sans-serif]" role="img" aria-label="块(1)">
      <path d="M324 222 616 357V499L324 365z" fill="#983a33" />
      <path d="M616 357 856 284V427L616 499z" fill="#b0453f" />
      <path d="M324 222 563 149 856 284 616 357z" fill="#ff6d60" />
      <g fill="none" stroke="#d8584d" strokeWidth="1.500">
        <path d="M563 149V292L324 365M563 292 856 427" />
      </g>
      <g fill="none" stroke="#e65b4f" strokeWidth="1.800" strokeLinejoin="round">
        <path d="M324 222 563 149 856 284V427L616 499 324 365z" />
        <path d="M324 222 616 357 856 284M616 357V499" />
      </g>
      <g fill="none" strokeWidth="1.200">
        <path d="M325 319 362 308V353L392 367 355 379" stroke="#e4aaa0" />
        <path d="M325 320 355 333V379" stroke="#6b2583" strokeWidth="1.500" />
        <path d="M389 344h7" stroke="#e4aaa0" strokeWidth="2" />
      </g>
      <g fontSize="9" fontWeight="bold">
        <text x="400" y="345" fill="#cf6d68">Y</text>
        <text x="320" y="274" fontSize="8" fill="#4d278b">Z</text>
        <text x="385" y="398" fontSize="8" fill="#8b2b7a">X</text>
      </g>
      <path d="M323 278v8M321 284l3-6v8" stroke="#3a278b" fill="none" />
      <path d="M376 389l7 3" stroke="#6b2583" strokeWidth="2.500" />
      <path d="M321 366h6M324 362v7" stroke="#c98d94" />
      <Triad x={300} y={480} z />
      <Triad x={374} y={481} />
      <path d="M340 472V517H330c0-20 2-35 10-42z" fill="#fff" />
      <path d="M340 476v41" stroke="#aaa" />
      <path d="M754 481c1-3 3-2 5-9" fill="none" stroke="#5e7a68" strokeWidth="1.200" />
      <text x="750" y="491" fontSize="8" fill="#a55">X</text>
      <g fill="none" stroke="#fff" strokeWidth="1.500">
        <path d="M768 456c4 0 5 4 2 6M828 450c1-5 5-8 9-8M841 436c4-5 8-4 11-1M902 454c1-5 4-8 8-8" />
      </g>
      <path d="M828 450c1-5 3-6 5-7M902 454c1-5 2-6 4-7" fill="none" stroke="#b7b7b7" />
    </svg>
    <div role="tooltip" className="absolute left-[232px] top-[177px] px-1.5 py-0.5 border border-[#e5b7b2] bg-[#e8cdca] text-[9px] leading-3 text-[#333]">块(1)</div>
    <div className="absolute right-0 top-[70px] w-2 h-[43px] rounded-l border border-r-0 border-[#383f47] bg-linear-to-r from-[#3d444c] via-[#8c9a93] to-[#4c534f]" />
  </main>
);

const taskSegments = [
  { width: 'w-[89px]', color: 'bg-[#8aa9c4]' },
  { width: 'w-[43px]', color: 'bg-[#e6e4ee]' },
  { width: 'w-[47px]', color: 'bg-[#a4c3df]' },
  { width: 'w-11', color: 'bg-[#d5e0ee]' },
  { width: 'w-[92px]', color: 'bg-[#97bbd9]' },
  { width: 'w-[27px]', color: 'bg-[#f2e6ea]' },
  { width: 'w-[64px]', color: 'bg-[#b3c9dc]' },
  { width: 'w-[43px]', color: 'bg-[#e1e1ed]' },
  { width: 'w-[240px]', color: 'bg-[#a6c6e2]' },
  { width: 'w-[80px]', color: 'bg-[#7f94b0]' },
  { width: 'w-[28px]', color: 'bg-[#e6eaf1]' },
  { width: 'w-[45px]', color: 'bg-linear-to-r from-[#dde5d4] via-[#94c94c] to-[#dfe3d6]' },
  { width: 'w-[28px]', color: 'bg-[#e2e6ee]' },
  { width: 'flex-1', color: 'bg-[#75869f]' },
];

const App: React.FC = () => (
  <div className="h-screen flex flex-col overflow-hidden bg-white text-[#1c1c1c] font-[Open_Sans,Noto_Sans_CJK_SC,sans-serif]">
    <TitleBar />
    <TabBar />
    <Ribbon />
    <FilterBar />
    <div className="flex-1 min-h-0 flex">
      <Sidebar />
      <Navigator />
      <Viewport />
    </div>
    <footer className="h-4 shrink-0 flex items-center border-t border-[#b5b5b5] bg-white text-[8px] font-semibold">
      <span className="w-[46%] pl-0.5">选择对象并使用 MB3，或者双击某一对象</span>
      <span className="flex-1">块(1)</span>
      <Icon name="grip" className="size-3" />
      <IconButton name="fullscreen" icon="size-[10px]" className="w-4 mr-9" />
    </footer>
    <div className="h-1 shrink-0 flex border-t border-[#68778c]">
      {taskSegments.map((s, i) => <span key={i} className={`${s.width} ${s.color} border-r border-[#68778c]`} />)}
    </div>
  </div>
);

export default App;
